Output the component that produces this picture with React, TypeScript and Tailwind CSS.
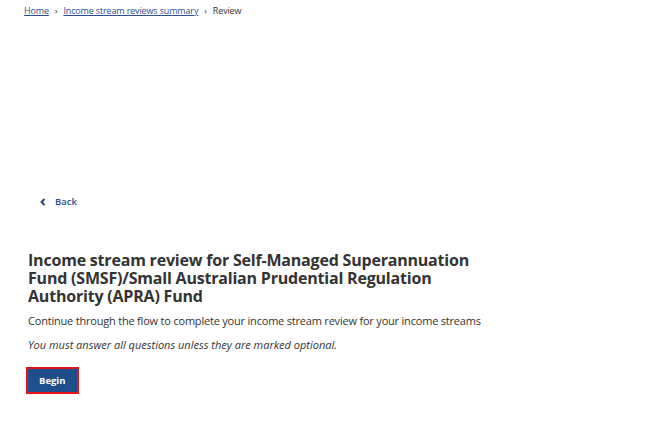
import React from "react";

const crumbs = [
  { label: "Home", href: "#" },
  { label: "Income stream reviews summary", href: "#" },
];

export default function App() {
  return (
    <div
      className="min-h-[424px] w-[650px] bg-white text-[#333]"
      style={{ fontFamily: '"Open Sans", "Noto Sans", sans-serif' }}
    >
      <nav className="flex items-center pl-6 pt-[4px] text-[9px] leading-[14px] tracking-[-0.15px]">
        {crumbs.map((c) => (
          <React.Fragment key={c.label}>
            <a href={c.href} className="text-[#2b4f8c] underline">
              {c.label}
            </a>
            <span className="mx-[6px] text-[#333]">›</span>
          </React.Fragment>
        ))}
        <span>Review</span>
      </nav>

      <div className="pl-[40px] pt-[177px]">
        <a href="#" className="flex items-center gap-[9px] text-[9.5px] font-semibold text-[#2b4f8c]">
          <svg width="6" height="8" viewBox="0 0 6 8">
            <path d="M4.5 1 L1.5 4 L4.5 7" fill="none" stroke="#1c3b78" strokeWidth="1.8" />
          </svg>
          Back
        </a>
      </div>

      <div className="pl-[28px] pt-[42px]">
        <h1 className="w-[450px] text-[16px] font-bold leading-[18px] tracking-[-0.2px] text-[#333]">
          Income stream review for Self-Managed Superannuation Fund (SMSF)/Small Australian
          Prudential Regulation Authority (APRA) Fund
        </h1>
        <p className="mt-[8px] text-[11px] leading-[16px] tracking-[-0.2px]">
          Continue through the flow to complete your income stream review for your income streams
        </p>
        <p className="mt-[8px] text-[11px] italic leading-[16px]">
          You must answer all questions unless they are marked optional.
        </p>
        <button className="-ml-[2px] mt-[14px] border-2 border-[#e4141e]">
          <span className="block bg-[#1f4e8c] px-[11px] py-[5px] text-[9.5px] font-bold leading-[13px] text-white">
            Begin
          </span>
        </button>
      </div>
    </div>
  );
}
